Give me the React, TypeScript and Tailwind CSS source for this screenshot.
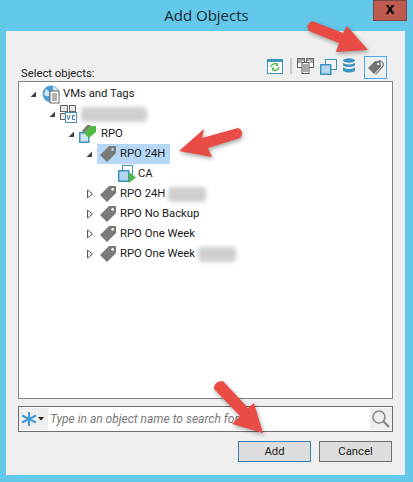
import React from "react";

const Tag = () => (
  <svg width="18" height="18" viewBox="0 0 18 18" className="shrink-0">
    <path d="M10 1 L17 1 L17 8 L8 17 L1 10 Z M13.6 3 a1.4 1.4 0 1 0 .01 0 Z" fill="#7a7a7a" fillRule="evenodd" />
  </svg>
);

const Open = () => (
  <svg width="8" height="8" viewBox="0 0 8 8" className="shrink-0"><path d="M7 1.5 V7 H1.5 Z" fill="#444" /></svg>
);
const Closed = () => (
  <svg width="8" height="10" viewBox="0 0 8 10" className="shrink-0"><path d="M1.5 1 L6.5 5 L1.5 9 Z" fill="#fff" stroke="#555" /></svg>
);

const Blur = ({ w }: { w: number }) => (
  <span className="block h-[15px] rounded-sm bg-[#cfcfcf] blur-[2px]" style={{ width: w }} />
);

const Row = ({ indent, children }: { indent: string; children: React.ReactNode }) => (
  <div className={`flex h-5 items-center ${indent}`}>{children}</div>
);

const TagRow = ({ label, blur }: { label: string; blur?: number }) => (
  <div className="flex h-5 items-center pl-[67px]">
    <span className="flex w-[11px] justify-start"><Closed /></span>
    <span className="ml-[2px] flex items-center gap-[3px]">
      <Tag />
      <span>{label}</span>
      {blur ? <Blur w={blur} /> : null}
    </span>
  </div>
);

export default function App() {
  return (
    <div className="relative flex h-[482px] w-[413px] flex-col overflow-hidden bg-[#63c8ea] text-[12px] text-[#1a1a1a]" style={{ fontFamily: 'Roboto, sans-serif' }}>
      <div className="relative flex h-[31px] shrink-0 items-center justify-center">
        <span className="text-[15px] text-[#1c2b33]" style={{ fontFamily: '"Open Sans", sans-serif' }}>Add Objects</span>
        <div className="absolute right-[6px] top-0 flex h-[21px] w-[34px] items-center justify-center border border-[#7c4a44] bg-[#bf5a50] pb-[3px] text-[16px] font-bold leading-none text-black" style={{ fontFamily: '"Liberation Sans", sans-serif' }}>
          x
        </div>
      </div>

      <div className="ml-[6px] flex h-[444px] w-[399px] flex-col bg-[#efefef] px-[12px]">
        <div className="flex h-[50px] shrink-0 items-end justify-between">
          <span className="mb-[2px] pl-[3px] text-[11.3px] leading-none">Select objects:</span>
          <div className="mb-[2px] mr-[6px] flex items-center">
            <svg width="16" height="15" viewBox="0 0 16 15" className="mb-[3px] mr-[7px]">
              <rect x=".5" y=".5" width="15" height="14" fill="#fff" stroke="#3c93bd" />
              <rect x="1" y="1" width="14" height="2" fill="#3c93bd" />
              <path d="M4 8 a4 4 0 0 1 7-2 M12 8 a4 4 0 0 1-7 2" fill="none" stroke="#5cb85c" strokeWidth="1.6" />
              <path d="M11 3.5 V7 H8 Z M5 12 V8.5 H8 Z" fill="#5cb85c" />
            </svg>
            <span className="mb-[3px] mr-[5px] h-[16px] w-[2px] bg-[#c9c9c9]" />
            <svg width="17" height="16" viewBox="0 0 17 16" className="mb-[3px] mr-[6px]">
              <rect x=".5" y=".5" width="7" height="9" fill="#fff" stroke="#666" />
              <rect x="9.5" y=".5" width="7" height="9" fill="#fff" stroke="#666" />
              <rect x="5" y="4.5" width="7" height="11" fill="#fff" stroke="#555" />
              <path d="M1 2h6M1 4h4M10 2h6M13 4h3M6 7h5M6 9h5M6 11h5M6 13h5" stroke="#555" />
            </svg>
            <svg width="17" height="17" viewBox="0 0 17 17" className="mb-[3px] mr-[6px]">
              <rect x="5.5" y="1.5" width="11" height="10" fill="#fff" fillOpacity=".3" stroke="#3c93bd" />
              <rect x=".75" y="6.75" width="10" height="9.5" fill="#b5d5ee" stroke="#3c93bd" strokeWidth="1.5" />
            </svg>
            <svg width="12" height="16" viewBox="0 0 12 16" className="mb-[3px] mr-[9px]">
              <ellipse cx="6" cy="2.5" rx="6" ry="2.2" fill="#3c93bd" />
              <path d="M0 5 q6 3 12 0 v2.5 q-6 3-12 0Z M0 9.5 q6 3 12 0 v3.5 q-6 3-12 0Z" fill="#3c93bd" />
            </svg>
            <div className="flex h-[23px] w-[23px] items-center justify-center border border-[#4aa8ee]">
              <svg width="18" height="18" viewBox="0 0 18 18">
                <path d="M11 1 L13.5 1 L17 4 L17 7 L9 16 L8 15 L15.5 6.5 L15.5 4 Z" fill="#8a8a8a" />
                <path d="M8 2 L13.5 2 L14 7.5 L7 15 L1 9 Z M11.3 3.8 a1.2 1.2 0 1 0 .01 0 Z" fill="#757575" fillRule="evenodd" />
              </svg>
            </div>
          </div>
        </div>

        <div className="h-[318px] shrink-0 border border-[#828282] bg-white pt-[2px] text-[11.3px] leading-none">
          <Row indent="pl-[10px]">
            <Open />
            <svg width="20" height="20" viewBox="0 0 20 20" className="ml-[5px] shrink-0">
              <circle cx="9" cy="10" r="8.5" fill="#4e9fd0" />
              <path d="M4 5 q5 3 3 7 q-4 1-5-2Z M11 2 q5 2 5 6 l-5-1Z" fill="#cfe6f3" />
              <rect x="8" y="7" width="9" height="12" fill="#fff" stroke="#666" />
              <path d="M10 10h5M10 12h5M10 14h5M10 16h5" stroke="#666" />
            </svg>
            <span className="ml-[1px]">VMs and Tags</span>
          </Row>
          <Row indent="pl-[29px]">
            <Open />
            <svg width="17" height="18" viewBox="0 0 17 18" className="ml-[4px] shrink-0">
              <rect x=".5" y=".5" width="7" height="6" fill="#e8e8e8" stroke="#666" />
              <rect x="9.5" y=".5" width="6" height="6" fill="#e8e8e8" stroke="#666" />
              <rect x=".5" y="8.5" width="5" height="6" fill="#e8e8e8" stroke="#666" />
              <rect x="5.5" y="7.5" width="11" height="10" fill="#fff" stroke="#4a8db5" />
              <path d="M7 10l1.5 5 1.5-5M15 10.5h-2.5v4H15" fill="none" stroke="#3c7fa8" />
            </svg>
            <span className="ml-[4px]"><Blur w={66} /></span>
          </Row>
          <Row indent="pl-[48px]">
            <Open />
            <svg width="18" height="20" viewBox="0 0 18 20" className="ml-[4px] shrink-0">
              <rect x=".75" y="8.75" width="9" height="9.5" fill="#cfe3f3" stroke="#3c93bd" strokeWidth="1.5" />
              <path d="M8 1 L12 1 L9 5 L5 9 L3 7 Z" fill="#7a7a7a" />
              <path d="M11 2 L17 2 L17 8 L10 14 L5 9 Z" fill="#52b848" />
            </svg>
            <span className="ml-[4px]">RPO</span>
          </Row>
          <Row indent="pl-[66px]">
            <Open />
            <span className="ml-[4px] flex h-5 w-[73px] items-center gap-[3px] bg-[#b6d7f5] pl-[2px]">
              <Tag />
              <span>RPO 24H</span>
            </span>
          </Row>
          <Row indent="pl-[99px]">
            <svg width="18" height="18" viewBox="0 0 18 18" className="shrink-0">
              <rect x="4.5" y=".5" width="10" height="9" fill="#fff" stroke="#3c93bd" />
              <rect x=".75" y="5.75" width="10" height="10.5" fill="#b5d5ee" stroke="#3c93bd" strokeWidth="1.5" />
              <path d="M11 7 L18 12.5 L11 18 Z" fill="#52b848" />
            </svg>
            <span className="ml-[2px]">CA</span>
          </Row>
          <TagRow label="RPO 24H" blur={38} />
          <TagRow label="RPO No Backup" />
          <TagRow label="RPO One Week" />
          <TagRow label="RPO One Week" blur={38} />
        </div>

        <div className="mt-[7px] flex h-[26px] shrink-0 items-center border border-[#6e6e6e] bg-white">
          <div className="flex h-[22px] w-[29px] items-center gap-[1px] bg-[#eeeeee] pl-[2px]">
            <svg width="16" height="16" viewBox="0 0 16 16">
              <path d="M8 1V15M1 4.5L15 11.5M15 4.5L1 11.5" stroke="#3f9ad6" strokeWidth="2" />
            </svg>
            <svg width="6" height="4" viewBox="0 0 6 4"><path d="M0 0H6L3 3.5Z" fill="#222" /></svg>
          </div>
          <span className="ml-[2px] flex-1 text-[12px] italic text-[#777]">Type in an object name to search for</span>
          <div className="flex h-[22px] w-[22px] items-center justify-center bg-[#eeeeee]">
            <svg width="20" height="20" viewBox="0 0 20 20">
              <circle cx="8" cy="8" r="6" fill="none" stroke="#8a8a8a" strokeWidth="1.6" />
              <path d="M12.5 12.5L18 18" stroke="#8a8a8a" strokeWidth="2.4" />
            </svg>
          </div>
        </div>

        <div className="mt-[9px] flex justify-end gap-[8px] pr-[1px]">
          <button className="h-[21px] w-[73px] border border-[#3a7fae] bg-[#dddddd] text-[11.3px] leading-none">Add</button>
          <button className="h-[21px] w-[73px] border border-[#707070] bg-[#dddddd] text-[11.3px] leading-none">Cancel</button>
        </div>
      </div>

      <svg className="absolute left-0 top-0" width="413" height="482" viewBox="0 0 413 482" style={{ filter: "drop-shadow(1px 2px 2px rgba(0,0,0,.35))" }}>
        <path d="M312 21 L343 33 L347 26 L368 50 L336 52 L339 43 L309 31 Q305 25 312 21 Z" fill="#e84c45" />
        <path d="M179 151 L204 129 L202 138 L238 128 Q245 131 240 138 L208 148 L212 157 Z" fill="#e84c45" />
        <path d="M263 433 L232 424 L240 416 L214 389 Q214 381 223 381 L248 408 L254 403 Z" fill="#e84c45" />
      </svg>
    </div>
  );
}
